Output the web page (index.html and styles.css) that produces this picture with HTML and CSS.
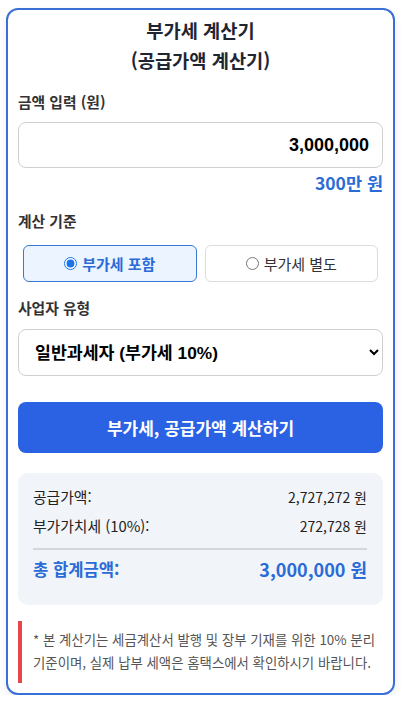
FILE: index.html
```
<!DOCTYPE html>
<html lang="ko">
<head>
<meta charset="utf-8">
<title>부가세 계산기</title>
<link rel="stylesheet" href="styles.css">
</head>
<body>
<div class="card">
  <h1 class="title">부가세 계산기<br>(공급가액 계산기)</h1>

  <label class="label" for="amount">금액 입력 (원)</label>
  <input id="amount" class="amount-input" type="text" value="3,000,000">
  <div class="amount-hint">300만 원</div>

  <div class="label label-gap">계산 기준</div>
  <div class="radio-group">
    <label class="radio-option selected">
      <input type="radio" name="basis" checked>
      <span>부가세 포함</span>
    </label>
    <label class="radio-option">
      <input type="radio" name="basis">
      <span>부가세 별도</span>
    </label>
  </div>

  <div class="label label-gap2">사업자 유형</div>
  <select class="type-select">
    <option>일반과세자 (부가세 10%)</option>
    <option>간이과세자</option>
  </select>

  <button class="calc-btn" type="button">부가세, 공급가액 계산하기</button>

  <div class="result">
    <div class="row"><span>공급가액:</span><span class="num">2,727,272 원</span></div>
    <div class="row row2"><span>부가가치세 (10%):</span><span class="num">272,728 원</span></div>
    <div class="divider"></div>
    <div class="row total"><span>총 합계금액:</span><span class="total-num">3,000,000 원</span></div>
  </div>

  <p class="note">* 본 계산기는 세금계산서 발행 및 장부 기재를 위한 10% 분리 기준이며, 실제 납부 세액은 홈택스에서 확인하시기 바랍니다.</p>
</div>
</body>
</html>
```

FILE: styles.css
```
* { box-sizing: border-box; }
html, body { margin: 0; background: #ffffff; }
body {
  padding: 8px 6px 0 6px;
  font-family: "Noto Sans CJK KR", "Noto Sans", sans-serif;
  color: #222;
}
.card {
  width: 389px;
  border: 2px solid #3a6fd6;
  border-radius: 12px;
  padding: 5px 10px 10px 10px;
  background: #fff;
  box-shadow: 0 4px 10px rgba(0,0,0,0.08);
  display: flex;
  flex-direction: column;
}
.title {
  margin: 0;
  text-align: center;
  font-size: 18.7px;
  line-height: 30px;
  font-weight: 700;
  color: #1f2633;
}
.label {
  display: block;
  margin-top: 17px;
  font-size: 14.8px;
  line-height: 20px;
  font-weight: 700;
  color: #333;
}
.label-gap { margin-top: 18px; }
.label-gap2 { margin-top: 16px; }
.amount-input {
  margin-top: 10px;
  height: 46px;
  width: 100%;
  border: 1px solid #cfcfcf;
  border-radius: 8px;
  padding: 0 13px;
  text-align: right;
  font-family: "Liberation Sans", "Noto Sans CJK KR", sans-serif;
  font-size: 18px;
  font-weight: 700;
  color: #000;
  background: #fff;
}
.amount-hint {
  margin-top: 5px;
  text-align: right;
  font-size: 17.5px;
  line-height: 20px;
  font-weight: 700;
  color: #2a6bd8;
}
.radio-group {
  margin-top: 14px;
  padding: 0 5px;
  display: grid;
  grid-template-columns: 1fr 1fr;
  gap: 8px;
}
.radio-option {
  height: 37px;
  border: 1px solid #dcdcdc;
  border-radius: 6px;
  background: #fff;
  display: flex;
  align-items: center;
  justify-content: center;
  gap: 5px;
  font-size: 15px;
  color: #333;
}
.radio-option input {
  margin: 0;
  width: 13px;
  height: 13px;
  accent-color: #1a73e8;
}
.radio-option.selected {
  background: #ebf4ff;
  border-color: #3a78d8;
  color: #2a6bd8;
  font-weight: 700;
}
.type-select {
  margin-top: 11px;
  height: 47px;
  width: 100%;
  border: 1px solid #cfcfcf;
  border-radius: 8px;
  padding: 0 10px 0 12px;
  font-family: "Liberation Sans", "Noto Sans CJK KR", sans-serif;
  font-size: 17.3px;
  font-weight: 700;
  color: #000;
  background: #fff;
}
.calc-btn {
  margin-top: 26px;
  height: 51px;
  width: 100%;
  border: none;
  border-radius: 8px;
  background: #2a62e3;
  color: #fff;
  font-family: "Noto Sans CJK KR", sans-serif;
  font-size: 17px;
  font-weight: 700;
}
.result {
  margin-top: 20px;
  background: #f1f4f8;
  border-radius: 10px;
  padding: 12px 16px 24px 15px;
}
.row {
  display: flex;
  justify-content: space-between;
  font-size: 14.8px;
  line-height: 24px;
  color: #222;
}
.row .num { font-size: 14px; }
.row2 { margin-top: 5px; }
.divider {
  margin-top: 10px;
  height: 2px;
  background: #d3d8df;
}
.total {
  margin-top: 7px;
  font-size: 16.6px;
  font-weight: 700;
  color: #2a6bd8;
}
.total-num { font-size: 18px; }
.note {
  margin: 16px 0 0 0;
  border-left: 4px solid #e8454a;
  padding: 7px 0 9px 11px;
  font-size: 13.4px;
  line-height: 23px;
  color: #555;
}
```
